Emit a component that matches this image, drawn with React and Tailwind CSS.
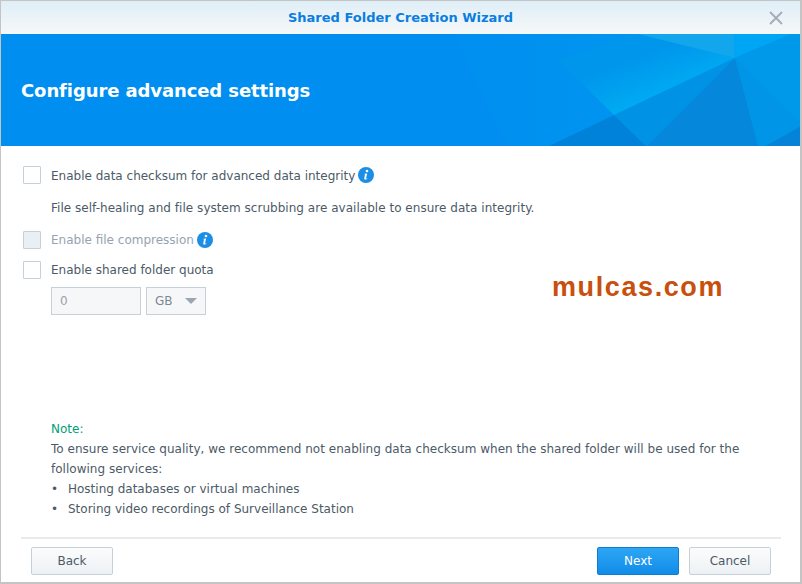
import React from "react";

function Checkbox({ disabled }) {
  return (
    <span
      className={`block w-[18px] h-[18px] border border-[#c6d0da] rounded-[1px] shrink-0 ${
        disabled ? "bg-[#e9eff4]" : "bg-white"
      }`}
    />
  );
}

function InfoIcon() {
  return (
    <svg width="16" height="16" viewBox="0 0 16 16" className="shrink-0">
      <circle cx="8" cy="8" r="8" fill="#1b8fe6" />
      <circle cx="9" cy="4" r="1.3" fill="#fff" />
      <path d="M6.6 6.7 L9.2 6.5 L8 11.2 Q7.9 11.9 9.2 11.2 L9.2 11.9 Q6 13.4 6.2 11.4 L7 7.6 L6.5 7.4 Z" fill="#fff" />
    </svg>
  );
}

function BannerArt() {
  return (
    <svg className="absolute inset-0" width="802" height="112" viewBox="0 0 802 112">
      <defs>
        <linearGradient id="left" x1="0" y1="0" x2="1" y2="0">
          <stop offset="0" stopColor="#0090f0" />
          <stop offset="1" stopColor="#0097ee" />
        </linearGradient>
        <linearGradient id="bright" gradientUnits="userSpaceOnUse" x1="625" y1="28" x2="645" y2="80">
          <stop offset="0" stopColor="#0096ec" />
          <stop offset="1" stopColor="#00b0f3" />
        </linearGradient>
      </defs>
      <polygon points="453,0 802,0 802,112 507,112" fill="url(#left)" />
      <polygon points="557,26 630,0 637,0 734,24 613,81" fill="url(#bright)" />
      <polygon points="637,0 733,0 734,24" fill="#12a6ec" />
      <polygon points="733,0 790,0 734,24" fill="#00a6f6" />
      <polygon points="790,0 802,0 802,91 734,24" fill="#0098e8" />
      <polygon points="548,112 613,81 645,112" fill="#0082da" />
      <polygon points="613,81 734,24 646,112" fill="#0092e4" />
      <polygon points="646,112 734,24 760,112" fill="#0588dc" />
      <polygon points="734,24 802,91 802,112 757,112" fill="#0095e6" />
      <polygon points="765,112 802,91 802,112" fill="#0583d8" />
    </svg>
  );
}

export default function App() {
  return (
    <div
      className="w-[802px] h-[584px] flex flex-col bg-white border-t border-l border-r-2 border-b-2 border-[#c4c4c4] overflow-hidden text-[12px] text-[#4c5a67]"
      style={{ fontFamily: '"DejaVu Sans", sans-serif' }}
    >
      <div className="h-[33px] shrink-0 bg-gradient-to-b from-[#dfeef7] to-[#f6f8f8] flex items-center justify-center relative">
        <span className="font-bold text-[#0a7ee0] text-[13px]">Shared Folder Creation Wizard</span>
        <svg width="14" height="14" viewBox="0 0 14 14" className="absolute right-[17px] top-[10px]">
          <path d="M1 1 L13 13 M13 1 L1 13" stroke="#a3acb6" strokeWidth="1.8" />
        </svg>
      </div>
      <div className="h-[112px] shrink-0 bg-[#008ff0] relative flex items-center pl-5">
        <BannerArt />
        <h1 className="relative text-white font-bold text-[18px] tracking-[-0.1px]">Configure advanced settings</h1>
      </div>

      <div className="flex-1 flex flex-col relative pl-[22px] pr-[30px] pt-[19px]">
        <div className="flex items-center gap-[10px] h-[20px]">
          <Checkbox />
          <span className="relative top-[1px]">Enable data checksum for advanced data integrity</span>
          <span className="-ml-[7px]"><InfoIcon /></span>
        </div>
        <p className="ml-[28px] mt-[14px] leading-[18px] tracking-[0.03px]">
          File self-healing and file system scrubbing are available to ensure data integrity.
        </p>
        <div className="flex items-center gap-[10px] h-[20px] mt-[13px]">
          <Checkbox disabled />
          <span className="text-[#96a3b0]">Enable file compression</span>
          <span className="-ml-[7px]"><InfoIcon /></span>
        </div>
        <div className="flex items-center gap-[10px] h-[20px] mt-[10px]">
          <Checkbox />
          <span>Enable shared folder quota</span>
        </div>
        <div className="flex gap-[5px] ml-[28px] mt-[7px]">
          <div className="w-[90px] h-[28px] border border-[#c6d0da] bg-[#f5f7f8] flex items-center pl-2 text-[#96a3b0]">0</div>
          <div className="w-[60px] h-[28px] border border-[#c6d0da] bg-[#f5f7f8] flex items-center justify-between pl-2 pr-[8px] text-[#7c8894]">
            GB
            <span className="w-0 h-0 border-l-[6px] border-r-[6px] border-t-[6px] border-l-transparent border-r-transparent border-t-[#9aa6b2]" />
          </div>
        </div>

        <div className="ml-[28px] mt-[104px] leading-[20px]">
          <div className="text-[#00a078]">Note:</div>
          <div className="tracking-[0.02px]">To ensure service quality, we recommend not enabling data checksum when the shared folder will be used for the following services:</div>
          <ul>
            <li className="flex"><span className="w-[17px]">•</span>Hosting databases or virtual machines</li>
            <li className="flex"><span className="w-[17px]">•</span>Storing video recordings of Surveillance Station</li>
          </ul>
        </div>

        <div className="absolute left-[551px] top-[121px] text-[#c8500f] text-[27px] font-bold tracking-[1.6px]" style={{ fontFamily: '"Liberation Sans", sans-serif' }}>
          mulcas.com
        </div>
      </div>

      <div className="ml-5 mr-[19px] shrink-0 h-[38px] border-t-2 border-[#e8ebee] flex items-start justify-between px-[10px] pt-[8px] mb-[7px]">
        <button className="w-[82px] h-[28px] border border-[#c6d0da] rounded-[2px] bg-gradient-to-b from-[#fbfcfc] to-[#eef1f4]">Back</button>
        <div className="flex gap-[10px]">
          <button className="w-[82px] h-[28px] border border-[#0f7cd0] rounded-[2px] bg-gradient-to-b from-[#2da6f5] to-[#0f8ce8] text-white">Next</button>
          <button className="w-[82px] h-[28px] border border-[#c6d0da] rounded-[2px] bg-gradient-to-b from-[#fbfcfc] to-[#eef1f4]">Cancel</button>
        </div>
      </div>
    </div>
  );
}
